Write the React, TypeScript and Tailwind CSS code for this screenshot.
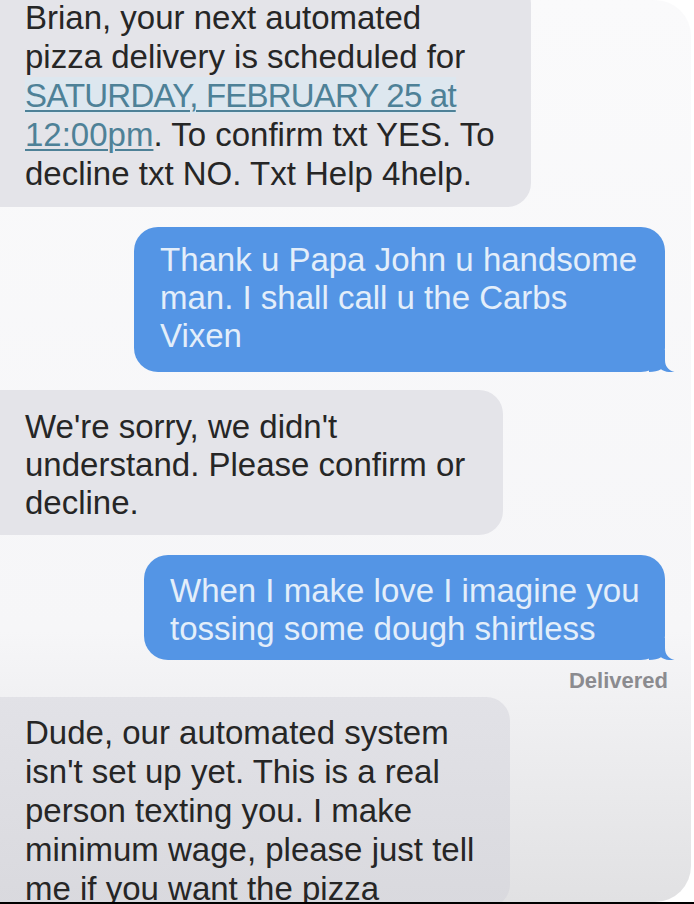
import type { ReactNode } from "react";

const font = { fontFamily: '"Liberation Sans", Arial, sans-serif' };

function Tail() {
  return (
    <svg
      className="absolute bottom-0 right-[-10px]"
      width="26"
      height="22"
      viewBox="0 0 26 22"
    >
      <path
        d="M16 0 L16 10 C16 16 19 20 25.5 22 C20 22.6 15 21.4 12 19.2 C9 21 5 22 0 22 L0 0 Z"
        fill="#5495e5"
      />
    </svg>
  );
}

function Incoming({ children, className }: { children: ReactNode; className: string }) {
  return (
    <div
      className={`self-start rounded-r-[24px] bg-[#e4e4e9] pl-[25px] text-[33px] text-[#262626] ${className}`}
    >
      {children}
    </div>
  );
}

function Outgoing({ children, className }: { children: ReactNode; className: string }) {
  return (
    <div
      className={`relative mr-[26px] self-end rounded-[24px] bg-[#5495e5] pl-[26px] text-[33px] leading-[38px] text-[#e3eefa] ${className}`}
    >
      {children}
      <Tail />
    </div>
  );
}

export default function App() {
  return (
    <div className="h-[904px] w-[694px] overflow-hidden bg-white" style={font}>
      <div className="flex h-[902px] w-[691px] flex-col overflow-hidden rounded-r-[36px] bg-gradient-to-b from-[#fafafb] via-[#f6f6f8] via-70% to-[#e1e1e3]">
        <Incoming className="-mt-[20px] w-[531px] pb-[14px] pt-[18px] leading-[39px]">
          <div>Brian, your next automated</div>
          <div>pizza delivery is scheduled for</div>
          <div>
            <span className="bg-[#dde7ef] tracking-[-0.8px] text-[#4e8197] underline decoration-[1.5px] underline-offset-[3px]">
              SATURDAY, FEBRUARY 25 at
            </span>
          </div>
          <div>
            <span className="text-[#4e8197] underline decoration-[1.5px] underline-offset-[3px]">
              12:00pm
            </span>
            . To confirm txt YES. To
          </div>
          <div>decline txt NO. Txt Help 4help.</div>
        </Incoming>

        <Outgoing className="mt-[20px] w-[531px] pb-[17px] pt-[14px]">
          <div>Thank u Papa John u handsome</div>
          <div>man. I shall call u the Carbs</div>
          <div>Vixen</div>
        </Outgoing>

        <Incoming className="mt-[18px] w-[503px] pb-[13px] pt-[18px] leading-[38px]">
          <div>We're sorry, we didn't</div>
          <div>understand. Please confirm or</div>
          <div>decline.</div>
        </Incoming>

        <Outgoing className="mt-[20px] w-[521px] pb-[12px] pl-[25px] pt-[17px]">
          <div>When I make love I imagine you</div>
          <div>tossing some dough shirtless</div>
        </Outgoing>

        <div className="mr-[23px] mt-[8px] self-end text-[22px] font-bold leading-[26px] text-[#8b8b8f]">
          Delivered
        </div>

        <Incoming className="mt-[3px] w-[510px] bg-gradient-to-b from-[#e2e2e7] to-[#d9d9de] pt-[16px] leading-[39px]">
          <div>Dude, our automated system</div>
          <div>isn't set up yet. This is a real</div>
          <div>person texting you. I make</div>
          <div>minimum wage, please just tell</div>
          <div>me if you want the pizza</div>
        </Incoming>
      </div>
      <div className="h-[2px] w-full bg-black" />
    </div>
  );
}
